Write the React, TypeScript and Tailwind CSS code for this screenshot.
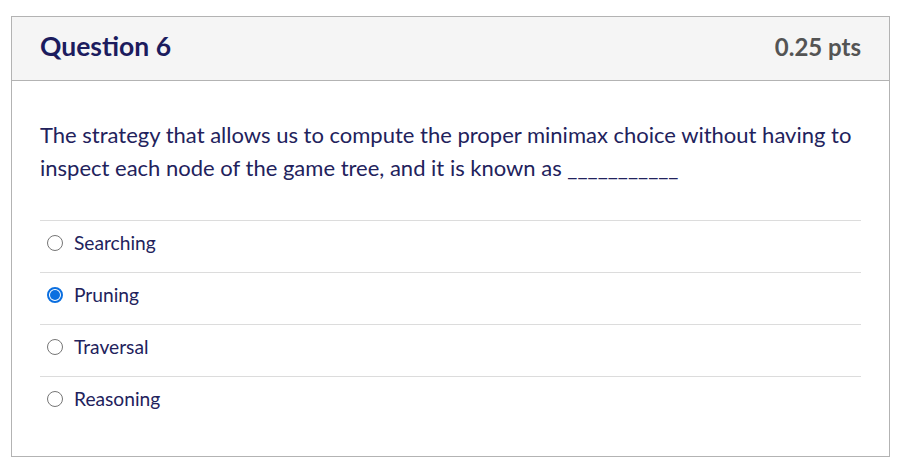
import React from "react";

const options = [
  { id: "a", label: "Searching", checked: false },
  { id: "b", label: "Pruning", checked: true },
  { id: "c", label: "Traversal", checked: false },
  { id: "d", label: "Reasoning", checked: false },
];

function Radio({ checked }: { checked: boolean }) {
  if (checked) {
    return (
      <span className="flex h-[16px] w-[16px] items-center justify-center rounded-full border-2 border-[#0b6fe0]">
        <span className="h-[10px] w-[10px] rounded-full bg-[#0b6fe0]" />
      </span>
    );
  }
  return <span className="block h-[16px] w-[16px] rounded-full border border-[#767676] bg-white" />;
}

export default function App() {
  return (
    <div className="min-h-[466px] w-[907px] bg-white pt-[16px] pl-[11px] font-['Lato',sans-serif]">
      <div className="w-[879px] border border-[#b3b3b3]">
        <div className="flex h-[64px] items-center justify-between border-b border-[#b3b3b3] bg-[#f5f5f5] pl-[28px] pr-[28px] pb-[3px]">
          <h2 className="text-[26.5px] font-bold text-[#1c1c5e]">Question 6</h2>
          <span className="text-[24px] font-bold text-[#545454]">0.25 pts</span>
        </div>
        <div className="px-[28px] pt-[37px] pb-[28px]">
          <p className="text-[22px] leading-[33px] text-[#22225c]">
            The strategy that allows us to compute the proper minimax choice without having to
            inspect each node of the game tree, and it is known as ___________
          </p>
          <div className="mt-[36px]">
            {options.map((o) => (
              <div
                key={o.id}
                className="flex h-[52px] items-center gap-[11px] border-t border-[#dcdcdc] pl-[7px] pb-[7px]"
              >
                <Radio checked={o.checked} />
                <span className="text-[19.2px] leading-[22px] text-[#22225c]">{o.label}</span>
              </div>
            ))}
          </div>
        </div>
      </div>
    </div>
  );
}
